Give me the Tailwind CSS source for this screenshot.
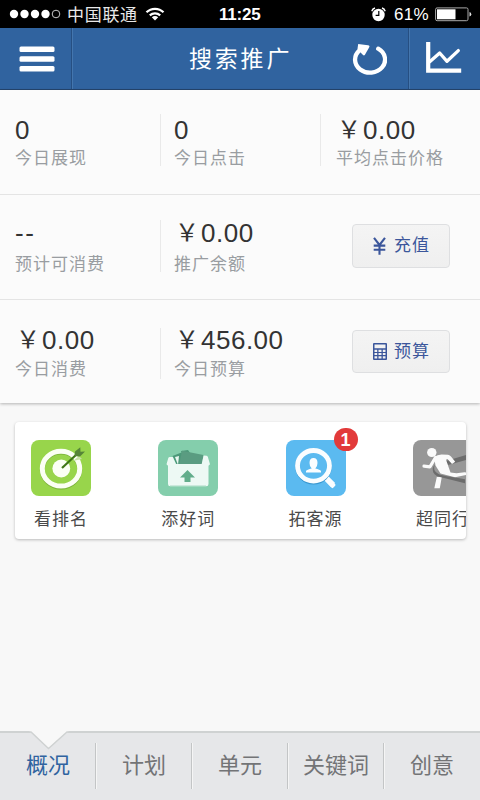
<!DOCTYPE html>
<html lang="zh-CN">
<head>
<meta charset="utf-8">
<title>搜索推广</title>
<script src="https://cdn.jsdelivr.net/npm/@tailwindcss/browser@4"></script>
</head>
<body class="w-[480px] h-[800px] overflow-hidden bg-[#f8f8f8] font-['Liberation_Sans','Noto_Sans_CJK_SC',sans-serif]">
<div class="flex h-[800px] w-[480px] flex-col overflow-hidden">

  <!-- Status bar -->
  <div class="relative flex h-7 shrink-0 items-center bg-black text-white">
    <svg class="ml-[9px]" width="52" height="10" viewBox="0 0 52 10"><g fill="#fff"><circle cx="5" cy="5" r="4.2"/><circle cx="15.5" cy="5" r="4.2"/><circle cx="26" cy="5" r="4.2"/><circle cx="36.5" cy="5" r="4.2"/></g><circle cx="47" cy="5" r="3.8" fill="none" stroke="#ddd" stroke-width=".9"/></svg>
    <span class="ml-[6px] h-7 text-[17px] leading-[31px] tracking-[.7px] text-[#e8e8e8]">中国联通</span>
    <svg class="ml-[7px]" width="20" height="14" viewBox="0 0 20 14"><g fill="none" stroke="#fff" stroke-width="2.2"><path d="M1.500 5.300C6.200.6 13.800.6 18.500 5.300"/><path d="M4.800 8.400c3-2.800 7.400-2.800 10.400 0"/></g><path d="M6.800 10.200c1.900-1.600 4.500-1.600 6.400 0L10 13.400z" fill="#fff"/></svg>
    <span class="absolute left-[219px] top-0 text-[17px] font-bold leading-[30px] tracking-[-.2px]">11:25</span>
    <svg class="absolute left-[371px] top-[7px]" width="15" height="15" viewBox="0 0 15 15"><circle cx="7.500" cy="8" r="6.200" fill="#fff"/><path d="M.8 4.200Q1.500 1.700 4 1M14.200 4.200Q13.500 1.700 11 1" stroke="#fff" stroke-width="1.400" fill="none"/><path d="M7.800 4v4.400H4.600" stroke="#000" stroke-width="1.200" fill="none"/></svg>
    <span class="absolute left-[394px] top-0 text-[17px] leading-[30px] tracking-[.3px]">61%</span>
    <svg class="absolute left-[435px] top-[7px]" width="37" height="15" viewBox="0 0 37 15"><rect x=".6" y=".9" width="32.400" height="12.800" rx="1.500" fill="none" stroke="#aaa" stroke-width="1"/><rect x="2" y="2.300" width="18.500" height="10" fill="#fff"/><path d="M34.500 5v4.500q1.800-.5 1.800-2.200T34.500 5z" fill="#ddd"/></svg>
  </div>

  <!-- Navigation bar -->
  <header class="flex h-[62px] shrink-0 border-b border-[#25466f] bg-[#30639f] text-white">
    <button class="flex w-[72px] items-center justify-center border-r border-[#264f82] shadow-[1px_0_0_#4476ae]">
      <svg class="ml-[2px]" width="36" height="28" viewBox="0 0 36 28"><g fill="#fff"><rect x=".5" y="1.400" width="35" height="5.500" rx="1.500"/><rect x=".5" y="11.200" width="35" height="5.500" rx="1.500"/><rect x=".5" y="21" width="35" height="5.500" rx="1.500"/></g></svg>
    </button>
    <h1 class="ml-[1px] w-[274px] pl-[116px] text-[23px] leading-[62px] tracking-[2.800px]">搜索推广</h1>
    <button class="flex w-[62px] items-center justify-center border-r border-[#264f82] pr-[1px] shadow-[1px_0_0_#4476ae]">
      <svg class="-ml-[16px]" width="36" height="34" viewBox="0 0 36 34"><path d="M26.500 6.200A15 13 0 1 1 7.800 7.900" fill="none" stroke="#fff" stroke-width="4.300" stroke-linecap="round" transform="translate(.7 .5)"/><path d="M7.200 2 17 3.300q2.200.4 1.100 2.300l-4.300 7.400q-.8.900-1.800.1L6.500 7.300Q6.800 4.600 7.200 2z" fill="#fff"/></svg>
    </button>
    <button class="flex flex-1 items-center justify-center">
      <svg class="-mt-[1px] -ml-[2px]" width="36" height="32" viewBox="0 0 36 32"><path d="M2.200 0v28.700H35.200" fill="none" stroke="#fff" stroke-width="4.200"/><path d="M4 19.500 13.700 11l7.300 8.300L32.300 8.600" fill="none" stroke="#fff" stroke-width="3.300" stroke-linejoin="round" stroke-linecap="round"/></svg>
    </button>
  </header>

  <!-- Account figures -->
  <section class="h-[313px] shrink-0 bg-[#fbfbfb] shadow-[0_1px_3px_rgba(0,0,0,.28)]">
    <div class="flex h-[105px] border-b border-[#e4e4e4] pt-6">
      <div class="h-[52px] w-[161px] border-r border-[#e9e9e9] pl-[15px]">
        <div class="h-[31px] text-[26px] leading-[33px] text-[#333]">0</div>
        <div class="text-[17px] leading-[28px] tracking-[1px] text-[#999da1]">今日展现</div>
      </div>
      <div class="h-[52px] w-[160px] border-r border-[#e9e9e9] pl-[13px]">
        <div class="h-[31px] text-[26px] leading-[33px] text-[#333]">0</div>
        <div class="text-[17px] leading-[28px] tracking-[1px] text-[#999da1]">今日点击</div>
      </div>
      <div class="pl-[15px]">
        <div class="flex h-[31px] text-[26px] leading-[33px] tracking-[.5px] text-[#333]"><span class="w-[27px] pl-[1px] text-[24px] leading-[32px]">￥</span>0.00</div>
        <div class="text-[17px] leading-[28px] tracking-[1px] text-[#999da1]">平均点击价格</div>
      </div>
    </div>
    <div class="flex h-[105px] border-b border-[#e4e4e4] pt-[25px]">
      <div class="h-[52px] w-[161px] border-r border-[#e9e9e9] pl-[15px]">
        <div class="h-[30px] text-[26px] leading-[27px] tracking-[1.500px] text-[#333]">--</div>
        <div class="text-[17px] leading-[30px] tracking-[1px] text-[#999da1]">预计可消费</div>
      </div>
      <div class="w-[191px] pl-[13px]">
        <div class="flex h-[30px] text-[26px] leading-[27px] tracking-[.5px] text-[#333]"><span class="w-[27px] pl-[1px] text-[24px] leading-[26px]">￥</span>0.00</div>
        <div class="text-[17px] leading-[30px] tracking-[1px] text-[#999da1]">推广余额</div>
      </div>
      <button class="mt-[4px] flex h-[44px] w-[98px] items-center rounded-[4px] border border-[#dedfe1] bg-linear-to-b from-[#f4f4f4] to-[#efefef] pl-[20px] text-[#3b569b]">
        <svg width="13" height="18" viewBox="0 0 13 18"><path d="M1 .8 6.500 8 12 .8M6.500 8v9.700M.7 8.600h11.600M.7 12.700h11.600" fill="none" stroke="#3b569b" stroke-width="2.100"/></svg>
        <span class="ml-[8px] text-[17px] tracking-[1px]">充值</span>
      </button>
    </div>
    <div class="flex h-[103px] pt-7">
      <div class="h-[51px] w-[161px] border-r border-[#e9e9e9] pl-[15px]">
        <div class="flex h-[28px] text-[26px] leading-[24px] tracking-[.5px] text-[#333]"><span class="w-[27px] pl-[1px] text-[24px] leading-[23px]">￥</span>0.00</div>
        <div class="text-[17px] leading-[27px] tracking-[1px] text-[#999da1]">今日消费</div>
      </div>
      <div class="w-[191px] pl-[13px]">
        <div class="flex h-[28px] text-[26px] leading-[24px] tracking-[.5px] text-[#333]"><span class="w-[27px] pl-[1px] text-[24px] leading-[23px]">￥</span>456.00</div>
        <div class="text-[17px] leading-[27px] tracking-[1px] text-[#999da1]">今日预算</div>
      </div>
      <button class="mt-[2px] flex h-[43px] w-[98px] items-center rounded-[4px] border border-[#dedfe1] bg-linear-to-b from-[#f4f4f4] to-[#efefef] pl-[20px] text-[#3b569b]">
        <svg width="14" height="17" viewBox="0 0 14 17"><rect width="14" height="17" rx="1" fill="#3b569b"/><path d="M1.500 1.500h11v3.800h-11zM1.500 6.800h2.700v2.100H1.500zM5.500 6.800h3v2.100h-3zM9.800 6.800h2.700v2.100H9.800zM1.500 10h2.700v2.100H1.500zM5.500 10h3v2.100h-3zM9.800 10h2.700v2.100H9.800zM1.500 13.300h2.700v2.100H1.500zM5.500 13.300h3v2.100h-3zM9.800 13.300h2.700v2.100H9.800z" fill="#f2f2f2"/></svg>
        <span class="ml-[7px] text-[17px] tracking-[1px]">预算</span>
      </button>
    </div>
  </section>

  <!-- Tools -->
  <section class="mx-[15px] mt-[19px] h-[117px] w-[451px] shrink-0 rounded-[4px] bg-white shadow-[0_1px_3px_rgba(0,0,0,.25)]">
    <div class="flex h-full gap-[67.300px] overflow-hidden rounded-[4px] pl-[16px] pt-[18px] text-[17px] text-[#4a4a4a]">
      <div class="w-[60px] shrink-0 text-center">
        <svg width="60" height="56" viewBox="0 0 60 56"><rect width="60" height="56" rx="8" fill="#98d54b"/><ellipse cx="30" cy="29.500" rx="18.700" ry="17.400" fill="none" stroke="#79b138" stroke-width="5"/><ellipse cx="30" cy="28.700" rx="18.700" ry="17.400" fill="none" stroke="#fbfff4" stroke-width="5"/><circle cx="30.300" cy="28.500" r="8.900" fill="#fbfff4"/><path d="m42 21 9-2-3-3z" fill="#c6e2a5"/><path d="M31 28 46 14" stroke="#3f7616" stroke-width="2.200"/><path d="m43.500 16 .5-4.500 5.300-4.200.2 4.500 4.500-.2-5 5z" fill="#568537"/></svg>
        <div class="mt-[8px] whitespace-nowrap leading-[32px] tracking-[1px]">看排名</div>
      </div>
      <div class="w-[60px] shrink-0 text-center">
        <svg width="60" height="56" viewBox="0 0 60 56"><rect width="60" height="56" rx="8" fill="#84ceac"/><path d="m14.500 16 9-3.500 7 13H19z" fill="#4c9879"/><path d="m17 17 4-1-1 9z" fill="#e9f8f0"/><path d="m23 11 7-1 2 3-7 5z" fill="#4c9879"/><path d="m24 10.700 21.500 4.300-2.300 13-22-4z" fill="#5a9c81"/><path d="M8.500 24.200 10.300 18q.4-1 1.500-1h3L18 24h25.700L45.600 15.500q3.900 0 4.200 1.200L52 24.200l-1.500 1.500v18.200q0 2.300-2.300 2.300H12.300Q10 46.200 10 43.900V25.700z" fill="#edf9f4"/><path d="M12 45.500h36" stroke="#cbe9dc"/><path d="m29.500 30 7.500 7.500h-4.500v4.500h-6v-4.500H22z" fill="#62ad8b"/></svg>
        <div class="mt-[8px] whitespace-nowrap leading-[32px] tracking-[1px]">添好词</div>
      </div>
      <div class="relative w-[60px] shrink-0 text-center">
        <svg width="60" height="56" viewBox="0 0 60 56"><rect width="60" height="56" rx="8" fill="#5bbaf0"/><path d="m38.500 36.500 8.500 8.500" stroke="#fafdff" stroke-width="6"/><ellipse cx="27.500" cy="26.500" rx="16" ry="15.500" fill="none" stroke="#3897d0" stroke-width="4.800"/><ellipse cx="27.500" cy="25.800" rx="16" ry="15.300" fill="#5bbaf0" stroke="#fafdff" stroke-width="4.800"/><path d="m43 38.500 6 5.500q1 .8.200 1.800l-2 2q-.8.700-1.600 0L40.500 42z" fill="#fafdff"/><path d="M25.700 28.500q-2.200-1.700-2.200-5.500 0-5 4-5t4 5q0 3.800-2.200 5.500 4.700 1 5.700 2.500v1.500H20V31q1-1.500 5.700-2.500z" fill="#fafdff"/></svg>
        <div class="mt-[8px] whitespace-nowrap leading-[32px] tracking-[1px]">拓客源</div>
        <span class="absolute left-[48px] top-[-12px] h-[23px] w-[24px] rounded-full bg-[#e23a3a] text-center text-[18px] font-bold leading-[24px] text-white">1</span>
      </div>
      <div class="w-[60px] shrink-0 text-center">
        <svg width="60" height="56" viewBox="0 0 60 56"><rect width="60" height="56" rx="8" fill="#979797"/><path d="M33 21 60 13v5L35 25z" fill="#6c6c6c"/><ellipse cx="18.800" cy="12.500" rx="4.700" ry="4.500" fill="#fafafa"/><path d="M21 17q3.500-2.500 7.500-2.500l6.500.2q2 .3 3.200 2l4 5-3.200 2.300-4.500-5-1.500.8 4.500 12.700 6 .8 8-1q2-.2 2.500 1.200l-1 1.500-11 2.300-14.500-3.800-5-8z" fill="#fafafa"/><path d="M22.500 17.500 17 26.800l-6-.6" fill="none" stroke="#fafafa" stroke-width="3.200" stroke-linecap="round" stroke-linejoin="round"/><path d="M23.800 37h5l-2 11.200h-5.500z" fill="#fafafa"/><path d="M22 24.500q-3 6 3.500 9.500 3.500 1.800 26.500 5.200v4L31 38q-9-1.500-10.700-5.500-1.800-4.500 1.700-8z" fill="#6c6c6c"/></svg>
        <div class="mt-[8px] whitespace-nowrap leading-[32px] tracking-[1px]">超同行</div>
      </div>
    </div>
  </section>

  <!-- Tabs -->
  <nav class="relative mt-auto grid h-[69px] shrink-0 grid-cols-5 border-t-2 border-[#cfd2d2] bg-[#e6e7e9] text-center text-[22px] leading-[66px] text-[#737476]">
    <svg class="absolute left-[29px] top-[-2px]" width="40" height="19" viewBox="0 0 40 19"><path d="M0 0h40L20 17.500z" fill="#f8f8f8"/><path d="M0 1h2l17.500 16.500L38 1h2" fill="none" stroke="#cfd2d2" stroke-width="1.500"/><path d="M3 0h34L19.500 16z" fill="#f8f8f8"/></svg>
    <a class="text-[#30639f]">概况</a>
    <a class="relative before:absolute before:left-[-1px] before:top-[10px] before:h-[46px] before:w-[2px] before:border-l before:border-[#c3c5c6] before:bg-[#f5f5f5] before:content-['']">计划</a>
    <a class="relative before:absolute before:left-[-1px] before:top-[10px] before:h-[46px] before:w-[2px] before:border-l before:border-[#c3c5c6] before:bg-[#f5f5f5] before:content-['']">单元</a>
    <a class="relative before:absolute before:left-[-1px] before:top-[10px] before:h-[46px] before:w-[2px] before:border-l before:border-[#c3c5c6] before:bg-[#f5f5f5] before:content-['']">关键词</a>
    <a class="relative before:absolute before:left-[-1px] before:top-[10px] before:h-[46px] before:w-[2px] before:border-l before:border-[#c3c5c6] before:bg-[#f5f5f5] before:content-['']">创意</a>
  </nav>
</div>
</body>
</html>
